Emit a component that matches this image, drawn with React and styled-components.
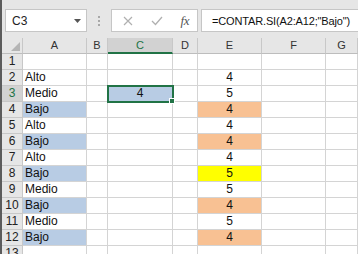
import React from 'react'
import styled, { createGlobalStyle } from 'styled-components'

const GREEN = '#217346'

const Global = createGlobalStyle`
  body {
    margin: 0;
    background: #ffffff;
    font-family: 'Liberation Sans', Arial, sans-serif;
  }
`

const Window = styled.div`
  width: 358px;
  height: 254px;
  overflow: hidden;
  border-left: 2px solid #5c5c5c;
  box-sizing: border-box;
  background: #ffffff;
`

const FormulaBar = styled.div`
  height: 38px;
  background: #e6e6e6;
  display: flex;
  align-items: flex-start;
  padding: 9px 0 0 3px;
  box-sizing: border-box;
`

const Box = styled.div`
  height: 23px;
  background: #ffffff;
  border: 1px solid #c6c6c6;
  box-sizing: border-box;
  display: flex;
  align-items: center;
`

const NameBox = styled(Box)`
  width: 82px;
  padding: 0 5px 0 6px;
  justify-content: space-between;
  font-size: 12px;
  color: #222;
`

const Grip = styled.div`
  width: 24px;
  height: 23px;
  display: flex;
  align-items: center;
  justify-content: center;
`

const ButtonsBox = styled(Box)`
  width: 87px;
  padding: 0 8px 0 11px;
  justify-content: space-between;
`

const Fx = styled.span`
  font-family: 'Liberation Serif', 'Times New Roman', serif;
  font-style: italic;
  font-size: 13px;
  color: #555;
  letter-spacing: -0.5px;
`

const FormulaInput = styled(Box)`
  flex: 1;
  margin-left: 3px;
  border-right: none;
  padding-left: 10px;
  font-size: 11px;
  letter-spacing: -0.15px;
  color: #111;
`

const Sheet = styled.div`
  display: grid;
  grid-template-columns: 21px 64px 21px 65px 25px 64px 64px 1fr;
  grid-auto-rows: 16px;
`

const Cell = styled.div`
  box-sizing: border-box;
  border-right: 1px solid #d4d4d4;
  border-bottom: 1px solid #d4d4d4;
  background: ${p => p.$fill || '#ffffff'};
  font-size: 12px;
  line-height: 15px;
  color: #111;
  padding: 0 2px;
  text-align: ${p => p.$align || 'left'};
  white-space: nowrap;
  overflow: hidden;
`

const Selected = styled(Cell)`
  position: relative;
  z-index: 2;
  overflow: visible;
  outline: 2px solid ${GREEN};
  outline-offset: -1px;
  &::after {
    content: '';
    position: absolute;
    right: -3px;
    bottom: -3px;
    width: 4px;
    height: 4px;
    background: ${GREEN};
    border: 1px solid #ffffff;
  }
`

const Head = styled.div`
  box-sizing: border-box;
  background: ${p => (p.$active ? '#d2d2d2' : '#e6e6e6')};
  color: ${p => (p.$active ? GREEN : '#333')};
  border-right: 1px solid #c8c8c8;
  border-bottom: ${p => (p.$active ? `2px solid ${GREEN}` : '1px solid #bdbdbd')};
  font-size: 11px;
  line-height: 15px;
  text-align: center;
`

const RowHead = styled(Head)`
  border-bottom: 1px solid #c8c8c8;
  font-size: 12px;
  color: ${p => (p.$active ? GREEN : '#222')};
`

const Corner = styled(Head)`
  position: relative;
  display: flex;
  align-items: flex-end;
  justify-content: flex-end;
  padding: 0 2px 2px 0;
`

const BLUE = '#b8cce4'
const ORANGE = '#f8c193'
const YELLOW = '#ffff00'

const rows = [
  { a: '', e: '' },
  { a: 'Alto', e: '4' },
  { a: 'Medio', e: '5', c: '4' },
  { a: 'Bajo', e: '4', ef: ORANGE },
  { a: 'Alto', e: '4' },
  { a: 'Bajo', e: '4', ef: ORANGE },
  { a: 'Alto', e: '4' },
  { a: 'Bajo', e: '5', ef: YELLOW },
  { a: 'Medio', e: '5' },
  { a: 'Bajo', e: '4', ef: ORANGE },
  { a: 'Medio', e: '5' },
  { a: 'Bajo', e: '4', ef: ORANGE },
  { a: '', e: '' },
]

const cols = ['A', 'B', 'C', 'D', 'E', 'F', 'G']

export default function App() {
  return (
    <Window>
      <Global />
      <FormulaBar>
        <NameBox>
          <span>C3</span>
          <svg width="7" height="4" viewBox="0 0 7 4">
            <path d="M0 0 L7 0 L3.5 4 Z" fill="#555" />
          </svg>
        </NameBox>
        <Grip>
          <svg width="2" height="10" viewBox="0 0 2 10">
            <rect x="0" y="0" width="2" height="2" fill="#a8a8a8" />
            <rect x="0" y="4" width="2" height="2" fill="#a8a8a8" />
            <rect x="0" y="8" width="2" height="2" fill="#a8a8a8" />
          </svg>
        </Grip>
        <ButtonsBox>
          <svg width="10" height="10" viewBox="0 0 10 10">
            <path d="M1 1 L9 9 M9 1 L1 9" stroke="#b0b0b0" strokeWidth="1.2" />
          </svg>
          <svg width="12" height="10" viewBox="0 0 12 10">
            <path d="M1 5 L4.5 8.5 L11 1" stroke="#b0b0b0" strokeWidth="1.3" fill="none" />
          </svg>
          <Fx>fx</Fx>
        </ButtonsBox>
        <FormulaInput>=CONTAR.SI(A2:A12;"Bajo")</FormulaInput>
      </FormulaBar>
      <Sheet>
        <Corner>
          <svg width="9" height="9" viewBox="0 0 9 9">
            <path d="M9 0 L9 9 L0 9 Z" fill="#b5b5b5" />
          </svg>
        </Corner>
        {cols.map(c => (
          <Head key={c} $active={c === 'C'}>{c}</Head>
        ))}
        {rows.map((r, i) => {
          const n = i + 1
          const sel = n === 3
          return (
            <React.Fragment key={n}>
              <RowHead $active={sel}>{n}</RowHead>
              <Cell $fill={r.a === 'Bajo' ? BLUE : undefined}>{r.a}</Cell>
              <Cell />
              {sel ? (
                <Selected $fill={BLUE} $align="center">{r.c}</Selected>
              ) : (
                <Cell />
              )}
              <Cell />
              <Cell $fill={r.ef} $align="center">{r.e}</Cell>
              <Cell />
              <Cell />
            </React.Fragment>
          )
        })}
      </Sheet>
    </Window>
  )
}
